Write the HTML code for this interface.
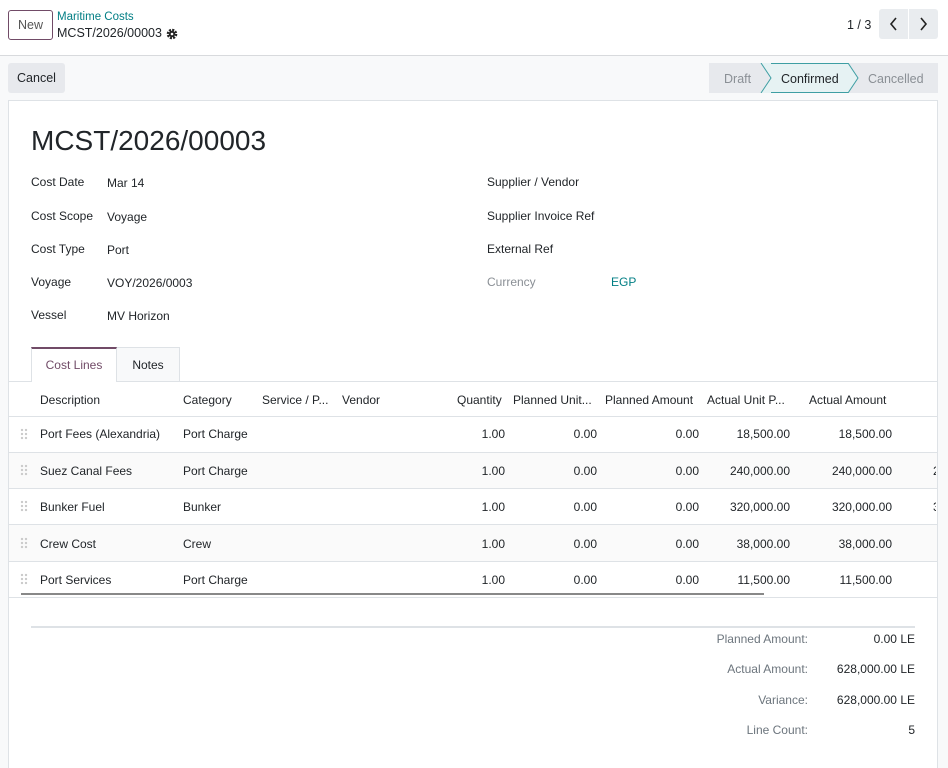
<!DOCTYPE html>
<html><head><meta charset="utf-8"><style>
*{box-sizing:border-box;margin:0;padding:0}
html,body{width:948px;height:768px;overflow:hidden}
body{font-family:"Liberation Sans",sans-serif;font-size:12px;color:#212529;background:#fff;position:relative}
.abs{position:absolute;white-space:nowrap}
.top{position:absolute;left:0;top:0;width:948px;height:56px;background:#fff;border-bottom:1px solid #d8dadd}
.gray{position:absolute;left:0;top:56px;width:948px;height:712px;background:#f8f9fa}
.sheet{position:absolute;left:8px;top:100px;width:930px;height:668px;background:#fff;border:1px solid #dee2e6;border-bottom:none}
.r{text-align:right}
.h{position:absolute;width:8px;height:12px;left:20px;background:radial-gradient(circle,#ccc 1.2px,transparent 1.3px) 0 0/4px 4px}
</style></head><body>
<div class="top"></div>
<div class="gray"></div>
<div class="abs" style="left:8px;top:10px;width:45px;height:30px;border:1px solid #714b67;border-radius:3px;color:#555;text-align:center;line-height:28px;font-size:12.5px">New</div>
<div class="abs" style="left:57px;top:11px;color:#017e84;font-size:11.5px">Maritime Costs</div>
<div class="abs" style="left:57px;top:26px;font-size:12.5px">MCST/2026/00003</div>
<svg class="abs" style="left:166px;top:28px" width="12" height="12" viewBox="0 0 12 12"><circle cx="6" cy="6" r="4" fill="none" stroke="#222" stroke-width="2.6" stroke-dasharray="2 1.15"/><circle cx="6" cy="6" r="3.2" fill="#222"/><circle cx="6" cy="6" r="1.3" fill="#fff"/></svg>
<div class="abs" style="left:847px;top:18px;font-size:12.5px">1 / 3</div>
<div class="abs" style="left:879px;top:9px;width:59px;height:30px;background:#e9ecef;border-radius:3px"></div>
<div class="abs" style="left:908px;top:9px;width:1px;height:30px;background:#fff"></div>
<svg class="abs" style="left:888px;top:16px" width="12" height="16"><path d="M8 2 L3 8 L8 14" stroke="#222" stroke-width="1.6" fill="none"/></svg>
<svg class="abs" style="left:917px;top:16px" width="12" height="16"><path d="M4 2 L9 8 L4 14" stroke="#222" stroke-width="1.6" fill="none"/></svg>

<div class="abs" style="left:8px;top:63px;width:57px;height:30px;background:#e7e9ed;border-radius:3px;text-align:center;line-height:30px;font-size:12.5px">Cancel</div>
<svg class="abs" style="left:709px;top:63px" width="229" height="30">
<rect x="0" y="0" width="229" height="30" fill="#e7e9ed"/>
<path d="M52 0 H139 L149 15 L139 30 H52 L62 15 Z" fill="#e6f2f3"/>
<path d="M52 0 L62 15 L52 30 M139 0 L149 15 L139 30" stroke="#3e9ea3" fill="none"/>
<line x1="62" y1="0.5" x2="139" y2="0.5" stroke="#3e9ea3"/>
<line x1="62" y1="29.5" x2="139" y2="29.5" stroke="#3e9ea3"/>
<text x="15" y="20" font-family="Liberation Sans" font-size="12.5" fill="#8a8f95">Draft</text>
<text x="72" y="20" font-family="Liberation Sans" font-size="12.5" fill="#212529">Confirmed</text>
<text x="159" y="20" font-family="Liberation Sans" font-size="12.5" fill="#8a8f95">Cancelled</text>
</svg>

<div class="sheet"></div>
<div class="abs" style="left:31px;top:125px;font-size:28px">MCST/2026/00003</div>
<div class="abs" style="left:31px;top:175px">Cost Date</div><div class="abs" style="left:107px;top:176px">Mar 14</div>
<div class="abs" style="left:31px;top:209px">Cost Scope</div><div class="abs" style="left:107px;top:210px">Voyage</div>
<div class="abs" style="left:31px;top:242px">Cost Type</div><div class="abs" style="left:107px;top:243px">Port</div>
<div class="abs" style="left:31px;top:275px">Voyage</div><div class="abs" style="left:107px;top:276px">VOY/2026/0003</div>
<div class="abs" style="left:31px;top:308px">Vessel</div><div class="abs" style="left:107px;top:309px">MV Horizon</div>
<div class="abs" style="left:487px;top:175px">Supplier / Vendor</div>
<div class="abs" style="left:487px;top:209px">Supplier Invoice Ref</div>
<div class="abs" style="left:487px;top:242px">External Ref</div>
<div class="abs" style="left:487px;top:275px;color:#8a8f95">Currency</div>
<div class="abs" style="left:611px;top:275px;color:#017e84">EGP</div>

<div class="abs" style="left:9px;top:381px;width:928px;height:1px;background:#dee2e6"></div>
<div class="abs" style="left:31px;top:347px;width:86px;height:35px;background:#fff;border:1px solid #dee2e6;border-top:2px solid #714b67;border-bottom:none;color:#714b67;text-align:center;line-height:33px">Cost Lines</div>
<div class="abs" style="left:117px;top:347px;width:63px;height:34px;background:#f8f9fa;border:1px solid #dee2e6;border-left:none;border-bottom:none;text-align:center;line-height:34px">Notes</div>

<div class="abs" style="left:40px;top:393px">Description</div>
<div class="abs" style="left:183px;top:393px">Category</div>
<div class="abs" style="left:262px;top:393px">Service / P...</div>
<div class="abs" style="left:342px;top:393px">Vendor</div>
<div class="abs" style="left:457px;top:393px">Quantity</div>
<div class="abs" style="left:513px;top:393px">Planned Unit...</div>
<div class="abs" style="left:605px;top:393px">Planned Amount</div>
<div class="abs" style="left:707px;top:393px">Actual Unit P...</div>
<div class="abs" style="left:809px;top:393px">Actual Amount</div>

<div class="abs" style="left:9px;top:452px;width:928px;height:37px;background:#fafafa"></div>
<div class="abs" style="left:9px;top:525px;width:928px;height:37px;background:#fafafa"></div>
<div class="abs" style="left:9px;top:416px;width:928px;height:1px;background:#dee2e6"></div>
<div class="abs" style="left:9px;top:452px;width:928px;height:1px;background:#dee2e6"></div>
<div class="abs" style="left:9px;top:488px;width:928px;height:1px;background:#dee2e6"></div>
<div class="abs" style="left:9px;top:524px;width:928px;height:1px;background:#dee2e6"></div>
<div class="abs" style="left:9px;top:561px;width:928px;height:1px;background:#dee2e6"></div>
<div class="abs" style="left:9px;top:597px;width:928px;height:1px;background:#dee2e6"></div>
<div class="abs" style="left:21px;top:593px;width:743px;height:2px;background:#888"></div>

<div class="h" style="top:428px"></div>
<div class="h" style="top:464px"></div>
<div class="h" style="top:500px"></div>
<div class="h" style="top:537px"></div>
<div class="h" style="top:573px"></div>

<div class="abs" style="left:40px;top:427px">Port Fees (Alexandria)</div><div class="abs" style="left:183px;top:427px">Port Charge</div>
<div class="abs" style="left:40px;top:464px">Suez Canal Fees</div><div class="abs" style="left:183px;top:464px">Port Charge</div>
<div class="abs" style="left:40px;top:500px">Bunker Fuel</div><div class="abs" style="left:183px;top:500px">Bunker</div>
<div class="abs" style="left:40px;top:537px">Crew Cost</div><div class="abs" style="left:183px;top:537px">Crew</div>
<div class="abs" style="left:40px;top:573px">Port Services</div><div class="abs" style="left:183px;top:573px">Port Charge</div>

<div class="abs r" style="right:443px;top:427px">1.00</div><div class="abs r" style="right:351px;top:427px">0.00</div><div class="abs r" style="right:249px;top:427px">0.00</div><div class="abs r" style="right:158px;top:427px">18,500.00</div><div class="abs r" style="right:56px;top:427px">18,500.00</div>
<div class="abs r" style="right:443px;top:464px">1.00</div><div class="abs r" style="right:351px;top:464px">0.00</div><div class="abs r" style="right:249px;top:464px">0.00</div><div class="abs r" style="right:158px;top:464px">240,000.00</div><div class="abs r" style="right:56px;top:464px">240,000.00</div>
<div class="abs r" style="right:443px;top:500px">1.00</div><div class="abs r" style="right:351px;top:500px">0.00</div><div class="abs r" style="right:249px;top:500px">0.00</div><div class="abs r" style="right:158px;top:500px">320,000.00</div><div class="abs r" style="right:56px;top:500px">320,000.00</div>
<div class="abs r" style="right:443px;top:537px">1.00</div><div class="abs r" style="right:351px;top:537px">0.00</div><div class="abs r" style="right:249px;top:537px">0.00</div><div class="abs r" style="right:158px;top:537px">38,000.00</div><div class="abs r" style="right:56px;top:537px">38,000.00</div>
<div class="abs r" style="right:443px;top:573px">1.00</div><div class="abs r" style="right:351px;top:573px">0.00</div><div class="abs r" style="right:249px;top:573px">0.00</div><div class="abs r" style="right:158px;top:573px">11,500.00</div><div class="abs r" style="right:56px;top:573px">11,500.00</div>
<div class="abs" style="left:933px;top:464px;width:3px;overflow:hidden">2</div><div class="abs" style="left:933px;top:500px;width:3px;overflow:hidden">3</div>

<div class="abs" style="left:31px;top:626px;width:884px;height:2px;background:#dee2e6"></div>
<div class="abs r" style="right:140px;top:632px;color:#6c757d">Planned Amount:</div><div class="abs r" style="right:33px;top:632px">0.00 LE</div>
<div class="abs r" style="right:140px;top:662px;color:#6c757d">Actual Amount:</div><div class="abs r" style="right:33px;top:662px">628,000.00 LE</div>
<div class="abs r" style="right:140px;top:693px;color:#6c757d">Variance:</div><div class="abs r" style="right:33px;top:693px">628,000.00 LE</div>
<div class="abs r" style="right:140px;top:723px;color:#6c757d">Line Count:</div><div class="abs r" style="right:33px;top:723px">5</div>
</body></html>
